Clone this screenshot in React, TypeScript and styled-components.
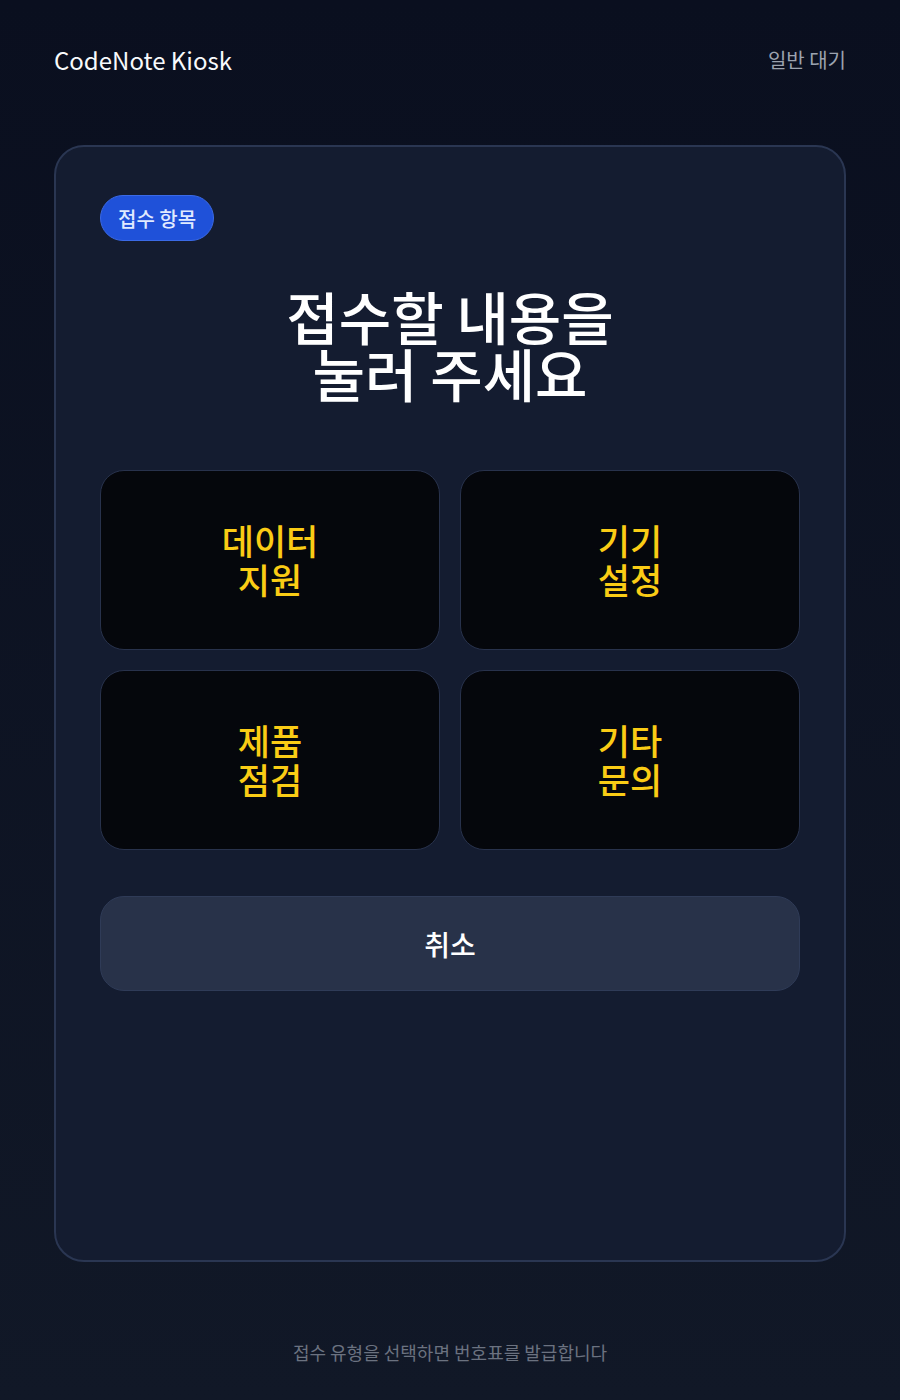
import React from "react";
import styled, { createGlobalStyle } from "styled-components";

const GlobalStyle = createGlobalStyle`
  * { box-sizing: border-box; }
  html, body { margin: 0; padding: 0; }
  body {
    background: #0b1020;
    font-family: "Noto Sans CJK KR", "Noto Sans", sans-serif;
  }
`;

const Page = styled.div`
  min-height: 1400px;
  display: flex;
  flex-direction: column;
  padding: 36px 54px 0;
  background: linear-gradient(180deg, #0a0f1f 0%, #111827 100%);
`;

const Header = styled.header`
  display: flex;
  justify-content: space-between;
  align-items: center;
  height: 46px;
`;

const Brand = styled.div`
  color: #f8fafc;
  font-size: 24px;
  font-weight: 400;
`;

const Status = styled.div`
  color: #9ca3af;
  font-size: 20px;
`;

const Card = styled.main`
  flex: 1;
  margin-top: 63px;
  background: #141c30;
  border: 2px solid #2a3652;
  border-radius: 30px;
  padding: 48px 44px;
  display: flex;
  flex-direction: column;
  align-items: stretch;
`;

const Badge = styled.span`
  align-self: flex-start;
  display: inline-flex;
  align-items: center;
  height: 46px;
  padding: 0 17px;
  border-radius: 23px;
  background: #1f51d9;
  border: 1px solid #3b6ae6;
  color: #e0eaff;
  font-size: 20px;
  font-weight: 500;
`;

const Title = styled.h1`
  margin: 46px 0 0;
  text-align: center;
  color: #ffffff;
  font-size: 57px;
  font-weight: 500;
  line-height: 57px;
`;

const Grid = styled.div`
  margin-top: 69px;
  display: grid;
  grid-template-columns: 1fr 1fr;
  gap: 20px;
`;

const Option = styled.button`
  height: 180px;
  padding: 0 0 3px;
  background: #05070c;
  border: 1px solid #28324c;
  border-radius: 24px;
  color: #facc15;
  font-family: inherit;
  font-size: 35px;
  font-weight: 500;
  line-height: 39px;
  cursor: pointer;
  display: flex;
  align-items: center;
  justify-content: center;
  text-align: center;
`;

const Cancel = styled.button`
  margin-top: 46px;
  height: 95px;
  background: #283249;
  border: 1px solid #2f3b57;
  border-radius: 24px;
  color: #ffffff;
  font-family: inherit;
  font-size: 28px;
  font-weight: 500;
  cursor: pointer;
`;

const Footer = styled.footer`
  padding: 78px 0 36px;
  text-align: center;
  color: #6b7280;
  font-size: 18px;
  line-height: 24px;
`;

const options = [
  ["데이터", "지원"],
  ["기기", "설정"],
  ["제품", "점검"],
  ["기타", "문의"],
];

export default function App() {
  return (
    <>
      <GlobalStyle />
      <Page>
        <Header>
          <Brand>CodeNote Kiosk</Brand>
          <Status>일반 대기</Status>
        </Header>
        <Card>
          <Badge>접수 항목</Badge>
          <Title>
            접수할 내용을
            <br />
            눌러 주세요
          </Title>
          <Grid>
            {options.map(([a, b]) => (
              <Option key={a + b}>
                <span>
                  {a}
                  <br />
                  {b}
                </span>
              </Option>
            ))}
          </Grid>
          <Cancel>취소</Cancel>
        </Card>
        <Footer>접수 유형을 선택하면 번호표를 발급합니다</Footer>
      </Page>
    </>
  );
}
